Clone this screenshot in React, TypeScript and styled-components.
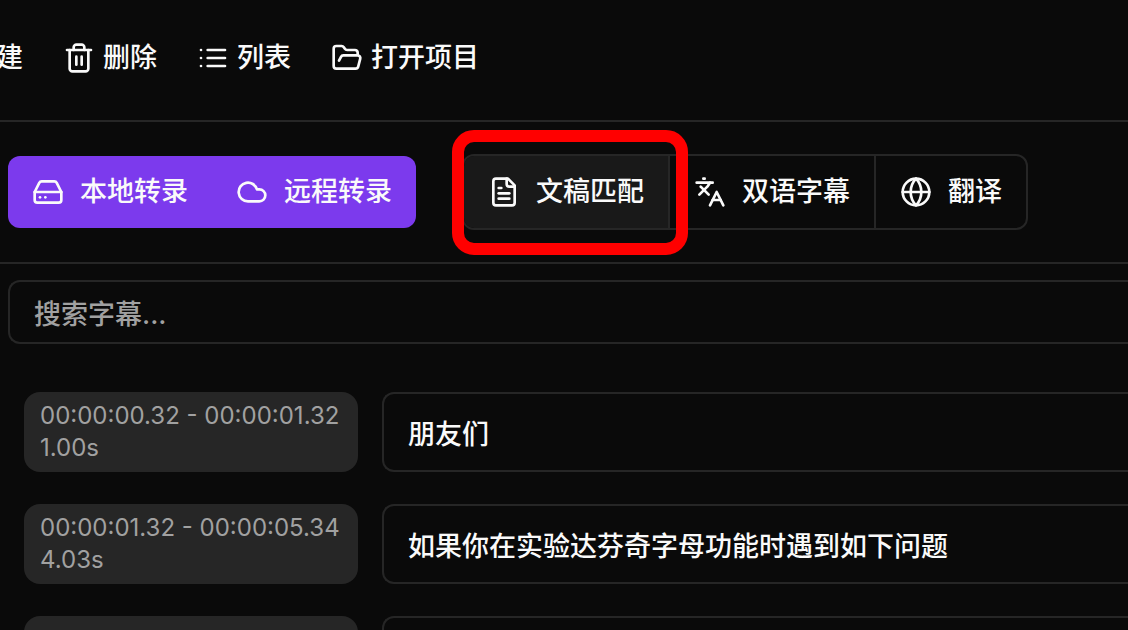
import React from 'react';
import styled, { createGlobalStyle, css } from 'styled-components';

const color = {
  page: '#0a0a0a',
  line: '#262626',
  hover: '#191919',
  text: '#fafafa',
  muted: '#a1a1a1',
  accent: '#7c3aed',
  marker: '#ff0000',
};

const GlobalStyle = createGlobalStyle`
  *, *::before, *::after { box-sizing: border-box; }
  body {
    margin: 0;
    background: ${color.page};
    color: ${color.text};
    font-family: Inter, 'Noto Sans CJK SC', sans-serif;
    font-size: 27px;
    font-weight: 500;
  }
  button, input { font: inherit; color: inherit; }
`;

const Shell = styled.div`
  display: flex;
  flex-direction: column;
  height: 100vh;
  overflow: hidden;
`;

const MenuBar = styled.header`
  display: flex;
  align-items: center;
  flex: none;
  gap: 40px;
  height: 122px;
  padding-bottom: 4px;
  margin-left: -4px;
  border-bottom: 2px solid ${color.line};
`;

const MenuButton = styled.button`
  display: flex;
  align-items: center;
  gap: 8px;
  padding: 0;
  border: 0;
  background: none;
  line-height: 40px;
  white-space: nowrap;
`;

const ActionBar = styled.div`
  display: flex;
  align-items: center;
  flex: none;
  gap: 46px;
  height: 142px;
  padding: 0 8px;
  border-bottom: 2px solid ${color.line};
`;

const Group = styled.div<{ $filled?: boolean }>`
  display: flex;
  flex: none;
  border-radius: 12px;
  ${(p) =>
    p.$filled
      ? css`background: ${color.accent};`
      : css`border: 2px solid ${color.line};`}
`;

const Segment = styled.div<{ $divided?: boolean }>`
  position: relative;
  border-left: ${(p) => (p.$divided ? `2px solid ${color.line}` : '0')};
`;

const ActionButton = styled.button<{ $active?: boolean }>`
  display: flex;
  align-items: center;
  gap: 16px;
  height: 72px;
  padding: 0 24px;
  border: 0;
  border-radius: 10px 0 0 10px;
  background: ${(p) => (p.$active ? color.hover : 'transparent')};
  line-height: 40px;
  white-space: nowrap;
`;

const Marker = styled.span`
  position: absolute;
  z-index: 1;
  inset: -26px -20px -27px -12px;
  border: 12px solid ${color.marker};
  border-radius: 22px;
  pointer-events: none;
`;

const Content = styled.main`
  padding: 16px 0 0 8px;
`;

const Field = styled.input`
  display: block;
  min-width: 0;
  padding: 0 24px;
  border: 2px solid ${color.line};
  border-right: 0;
  border-radius: 12px 0 0 12px;
  background: transparent;
  outline: none;
`;

const SearchField = styled(Field)`
  width: 100%;
  height: 64px;
  padding-top: 4px;
  &::placeholder { color: ${color.muted}; opacity: 1; }
`;

const Rows = styled.ul`
  display: flex;
  flex-direction: column;
  gap: 32px;
  margin: 0;
  padding: 48px 0 0 16px;
  list-style: none;
`;

const Row = styled.li`
  display: flex;
  gap: 24px;
`;

const TimeRange = styled.div`
  flex: none;
  min-width: 334px;
  height: 80px;
  padding: 8px 16px;
  border-radius: 16px;
  background: ${color.line};
  color: ${color.muted};
  font-size: 24px;
  font-weight: 400;
  line-height: 32px;
  white-space: nowrap;
`;

const SubtitleField = styled(Field)`
  flex: 1;
  height: 80px;
`;

const IconSvg = styled.svg`
  flex: none;
  width: 32px;
  height: 32px;
  fill: none;
  stroke: currentColor;
  stroke-width: 2;
  stroke-linecap: round;
  stroke-linejoin: round;
`;

const iconPaths = {
  trash: ['M3 6h18', 'M19 6v14c0 1-1 2-2 2H7c-1 0-2-1-2-2V6', 'M8 6V4c0-1 1-2 2-2h4c1 0 2 1 2 2v2', 'M10 11v6', 'M14 11v6'],
  list: ['M8 6h13', 'M8 12h13', 'M8 18h13', 'M3 6h.01', 'M3 12h.01', 'M3 18h.01'],
  folder: ['m6 14 1.5-2.9A2 2 0 0 1 9.24 10H20a2 2 0 0 1 1.94 2.5l-1.54 6a2 2 0 0 1-1.95 1.5H4a2 2 0 0 1-2-2V5a2 2 0 0 1 2-2h3.9a2 2 0 0 1 1.69.9l.81 1.2a2 2 0 0 0 1.67.9H18a2 2 0 0 1 2 2v2'],
  drive: ['M22 12H2', 'M5.45 5.11 2 12v6a2 2 0 0 0 2 2h16a2 2 0 0 0 2-2v-6l-3.45-6.89A2 2 0 0 0 16.76 4H7.24a2 2 0 0 0-1.79 1.11z', 'M6 16h.01', 'M10 16h.01'],
  cloud: ['M17.5 19H9a7 7 0 1 1 6.71-9h1.79a4.5 4.5 0 1 1 0 9Z'],
  file: ['M15 2H6a2 2 0 0 0-2 2v16a2 2 0 0 0 2 2h12a2 2 0 0 0 2-2V7Z', 'M14 2v4a2 2 0 0 0 2 2h4', 'M10 9H8', 'M16 13H8', 'M16 17H8'],
  languages: ['m5 8 6 6', 'm4 14 6-6 2-3', 'M2 5h12', 'M7 2h1', 'm22 22-5-10-5 10', 'M14 18h6'],
  globe: ['M22 12a10 10 0 1 1-20 0a10 10 0 1 1 20 0', 'M12 2a14.5 14.5 0 0 0 0 20 14.5 14.5 0 0 0 0-20', 'M2 12h20'],
};

type IconName = keyof typeof iconPaths;

const Icon = ({ name }: { name: IconName }) => (
  <IconSvg viewBox="0 0 24 24" aria-hidden="true">
    {iconPaths[name].map((d) => (
      <path key={d} d={d} />
    ))}
  </IconSvg>
);

const menu: { label: string; icon?: IconName }[] = [
  { label: '建' },
  { label: '删除', icon: 'trash' },
  { label: '列表', icon: 'list' },
  { label: '打开项目', icon: 'folder' },
];

const transcribe: { label: string; icon: IconName }[] = [
  { label: '本地转录', icon: 'drive' },
  { label: '远程转录', icon: 'cloud' },
];

const tools: { label: string; icon: IconName; active?: boolean }[] = [
  { label: '文稿匹配', icon: 'file', active: true },
  { label: '双语字幕', icon: 'languages' },
  { label: '翻译', icon: 'globe' },
];

const subtitles = [
  { range: '00:00:00.32 - 00:00:01.32', length: '1.00s', text: '朋友们' },
  { range: '00:00:01.32 - 00:00:05.34', length: '4.03s', text: '如果你在实验达芬奇字母功能时遇到如下问题' },
  { range: '', length: '', text: '' },
];

export default function App() {
  return (
    <>
      <GlobalStyle />
      <Shell>
        <MenuBar>
          {menu.map((item) => (
            <MenuButton key={item.label} type="button">
              {item.icon && <Icon name={item.icon} />}
              {item.label}
            </MenuButton>
          ))}
        </MenuBar>
        <ActionBar>
          <Group $filled>
            {transcribe.map((item) => (
              <ActionButton key={item.label} type="button">
                <Icon name={item.icon} />
                {item.label}
              </ActionButton>
            ))}
          </Group>
          <Group>
            {tools.map((item, i) => (
              <Segment key={item.label} $divided={i > 0}>
                <ActionButton type="button" $active={item.active}>
                  <Icon name={item.icon} />
                  {item.label}
                </ActionButton>
                {item.active && <Marker />}
              </Segment>
            ))}
          </Group>
        </ActionBar>
        <Content>
          <SearchField type="text" placeholder="搜索字幕..." aria-label="搜索字幕" />
          <Rows>
            {subtitles.map((s, i) => (
              <Row key={i}>
                <TimeRange>
                  <div>{s.range}</div>
                  <div>{s.length}</div>
                </TimeRange>
                <SubtitleField type="text" defaultValue={s.text} aria-label={`字幕 ${i + 1}`} />
              </Row>
            ))}
          </Rows>
        </Content>
      </Shell>
    </>
  );
}
